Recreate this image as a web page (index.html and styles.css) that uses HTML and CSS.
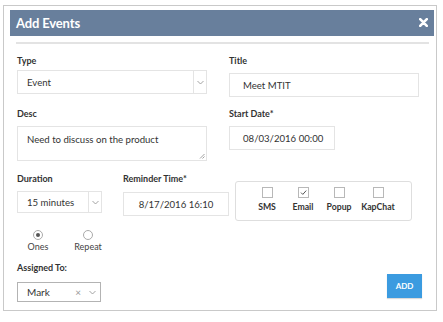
FILE: index.html
```html
<!DOCTYPE html>
<html>
<head>
<meta charset="utf-8">
<link rel="stylesheet" href="styles.css">
</head>
<body>
<div class="frame">
  <div class="header">
    <span class="header-title">Add Events</span>
    <svg class="close" width="9" height="9" viewBox="0 0 9 9"><path d="M1.2 1.2 L7.8 7.8 M7.8 1.2 L1.2 7.8" stroke="#fff" stroke-width="2.6" stroke-linecap="round"/></svg>
  </div>
  <div class="rule"></div>
  <div class="form">
    <div class="row row1">
      <div class="col">
        <div class="label">Type</div>
        <div class="select select-type">
          <span class="select-value">Event</span>
          <span class="select-arrow"><svg width="7" height="5" viewBox="0 0 7 5"><path d="M0.5 1 L3.5 4 L6.5 1" fill="none" stroke="#999" stroke-width="0.9"/></svg></span>
        </div>
      </div>
      <div class="col">
        <div class="label">Title</div>
        <div class="input input-title">Meet MTIT</div>
      </div>
    </div>
    <div class="row row2">
      <div class="col">
        <div class="label">Desc</div>
        <div class="textarea">Need to discuss on the product
          <svg class="grip" width="6" height="6" viewBox="0 0 6 6"><path d="M5.5 1 L1 5.5 M5.5 3.5 L3.5 5.5" stroke="#888" stroke-width="0.8"/></svg>
        </div>
      </div>
      <div class="col">
        <div class="label">Start Date*</div>
        <div class="input input-date">08/03/2016 00:00</div>
      </div>
    </div>
    <div class="row row3">
      <div class="col-duration">
        <div class="label">Duration</div>
        <div class="select select-duration">
          <span class="select-value">15 minutes</span>
          <span class="select-arrow"><svg width="7" height="5" viewBox="0 0 7 5"><path d="M0.5 1 L3.5 4 L6.5 1" fill="none" stroke="#999" stroke-width="0.9"/></svg></span>
        </div>
      </div>
      <div class="col-reminder">
        <div class="label">Reminder Time*</div>
        <div class="input input-reminder">8/17/2016 16:10</div>
      </div>
      <div class="channels">
        <div class="channel"><span class="check"></span><span class="channel-label">SMS</span></div>
        <div class="channel"><span class="check checked"><svg width="9" height="9" viewBox="0 0 9 9"><path d="M2 4.6 L3.8 6.4 L7.2 2.6" fill="none" stroke="#555" stroke-width="1"/></svg></span><span class="channel-label">Email</span></div>
        <div class="channel"><span class="check"></span><span class="channel-label">Popup</span></div>
        <div class="channel"><span class="check"></span><span class="channel-label">KapChat</span></div>
      </div>
    </div>
    <div class="row row4">
      <div class="radio-item"><span class="radio on"></span><span class="radio-label">Ones</span></div>
      <div class="radio-item"><span class="radio"></span><span class="radio-label">Repeat</span></div>
    </div>
    <div class="row row5">
      <div class="col-assign">
        <div class="label">Assigned To:</div>
        <div class="select select-assign">
          <span class="select-value">Mark</span>
          <span class="clear">×</span>
          <svg class="assign-arrow" width="7" height="5" viewBox="0 0 7 5"><path d="M0.5 1 L3.5 4 L6.5 1" fill="none" stroke="#999" stroke-width="0.9"/></svg>
        </div>
      </div>
      <button class="add-btn">ADD</button>
    </div>
  </div>
</div>
</body>
</html>
```
FILE: styles.css
```css
* { box-sizing: border-box; }
html, body { margin: 0; padding: 0; background: #fff; }
body { font-family: Lato, "Open Sans", sans-serif; color: #333; }

.frame {
  margin: 5px 0 0 3px;
  width: 434px;
  height: 306px;
  border: 1px solid #c9c9c9;
  padding: 4px 2px 0 6px;
}
.header {
  height: 26px;
  background: #687f9c;
  display: flex;
  align-items: center;
  justify-content: space-between;
  padding: 0 6px 0 6px;
}
.header-title {
  color: #fff;
  font-size: 13px;
  font-weight: 700;
  letter-spacing: -0.15px;
}
.close { display: block; margin-top: -1px; }
.rule {
  margin: 6px 5px 0 6px;
  height: 2px;
  background: #e3e3e3;
}
.form { padding-left: 7px; }
.row { display: flex; }
.col { width: 190px; }
.row1 { gap: 22px; margin-top: 11px; }
.label {
  font-size: 9px;
  font-weight: 700;
  line-height: 12px;
  color: #333;
}
.select, .input, .textarea {
  border: 1px solid #e4e4e4;
  background: #fff;
  font-size: 9.6px;
  color: #333;
}
.select { display: flex; align-items: stretch; }
.select-value { flex: 1; padding-left: 9px; display: flex; align-items: center; }
.select-arrow {
  width: 13px;
  border-left: 1px solid #e4e4e4;
  display: flex; align-items: center; justify-content: center;
}
.select-type { margin-top: 3px; height: 24px; }
.input { display: flex; align-items: center; height: 24px; padding-left: 13px; }
.input-title { margin-top: 6px; }
.row2 { gap: 22px; margin-top: 11px; }
.textarea {
  position: relative;
  margin-top: 6px;
  height: 35px;
  padding: 6px 9px;
  line-height: 13px;
}
.grip { position: absolute; right: 1px; bottom: 1px; }
.input-date { margin-top: 6px; width: 106px; }

.row3 { margin-top: 12px; align-items: flex-start; }
.col-duration { width: 85px; }
.select-duration { margin-top: 6px; height: 22px; }
.select-duration .select-arrow { width: 13px; }
.col-reminder { width: 106px; margin-left: 21px; }
.input-reminder { margin-top: 7px; justify-content: center; padding-left: 0; }
.channels {
  margin-left: 6px;
  margin-top: 8px;
  width: 177px;
  height: 40px;
  border: 1px solid #dedede;
  border-radius: 3px;
  display: flex;
  padding: 5px 0 0 13px;
}
.channel {
  display: flex;
  flex-direction: column;
  align-items: center;
  width: 36px;
}
.channel:nth-child(4) { width: 42px; }
.check {
  width: 11px; height: 11px;
  border: 1px solid #b8b8b8;
  display: flex; align-items: center; justify-content: center;
}
.channel-label {
  font-size: 8.7px;
  font-weight: 700;
  color: #333;
  margin-top: 3px;
  line-height: 11px;
}

.row4 { margin-top: 9px; padding-left: 8px; }
.radio-item {
  display: flex; flex-direction: column; align-items: center;
  width: 26px;
}
.radio-item + .radio-item { margin-left: 24px; }
.radio {
  width: 10px; height: 10px;
  border: 1px solid #aaa;
  border-radius: 50%;
  display: flex; align-items: center; justify-content: center;
}
.radio.on::after {
  content: "";
  width: 4px; height: 4px;
  border-radius: 50%;
  background: #555;
}
.radio-label { font-size: 9px; color: #444; margin-top: 1px; line-height: 11px; }

.row5 { margin-top: 10px; justify-content: space-between; align-items: flex-start; }
.col-assign { width: 84px; }
.select-assign {
  margin-top: 8px;
  height: 20px;
  border-color: #b3b3b3;
  align-items: center;
  font-size: 10px;
}
.select-assign .select-value { padding-left: 9px; }
.clear { color: #999; font-size: 10px; margin-right: 8px; }
.assign-arrow { margin-right: 4px; }
.add-btn {
  margin-top: 12px;
  margin-right: 12px;
  width: 35px;
  height: 24px;
  border: none;
  background: #3b9be0;
  color: #fff;
  font-family: Lato, sans-serif;
  font-weight: 700;
  font-size: 8px;
  padding: 0;
  box-shadow: 0 1px 1px rgba(0,0,0,0.15);
}
```
